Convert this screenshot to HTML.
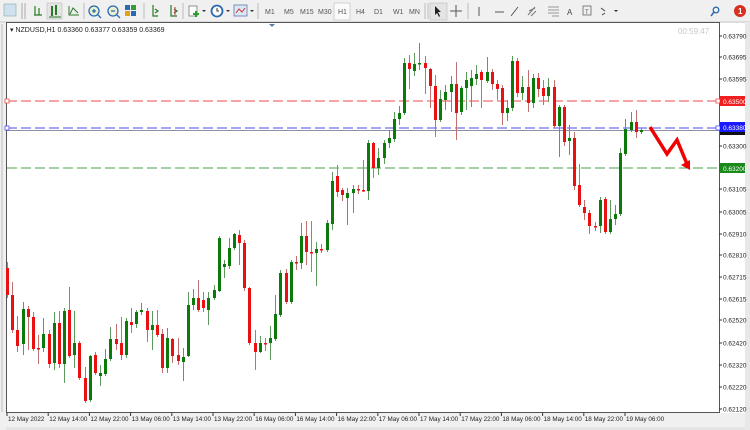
<!DOCTYPE html>
<html><head><meta charset="utf-8"><style>
html,body{margin:0;padding:0;width:750px;height:430px;overflow:hidden;background:#f0f0f0;font-family:"Liberation Sans",sans-serif}
svg{position:absolute;left:0;top:0}
text{font-family:"Liberation Sans",sans-serif}
</style></head><body>
<svg id="s" width="750" height="430" viewBox="0 0 750 430" xmlns="http://www.w3.org/2000/svg">
<rect x="0" y="0" width="750" height="22" fill="#f0f0f0"/>
<line x1="0" y1="22" x2="750" y2="22" stroke="#c8c8c8"/>
<g font-size="7" fill="#555">
<rect x="4" y="4" width="12" height="12" fill="#cfe0ee" stroke="#8aa" stroke-width="0.6"/>
<line x1="22" y1="3" x2="22" y2="19" stroke="#aaa"/><line x1="25" y1="3" x2="25" y2="19" stroke="#aaa"/>
<path d="M35 6v9M39 8v7M34 15h8" stroke="#2a7a2a" stroke-width="1.2" fill="none"/>
<rect x="47" y="3" width="15" height="16" fill="#e4e4e4" stroke="#bbb" stroke-width="0.6"/>
<path d="M52 6v10M56 5v10" stroke="#2a7a2a" stroke-width="2" fill="none"/><path d="M49 17h12" stroke="#2a7a2a"/>
<path d="M69 6v9h10M70 14l3-6 5 5" stroke="#2a7a2a" stroke-width="1" fill="none"/>
<line x1="84" y1="3" x2="84" y2="19" stroke="#bbb"/>
<circle cx="94" cy="11" r="5" fill="#e8f0d0" stroke="#2a6ab0" stroke-width="1.3"/><path d="M92 11h4M94 9v4M98 15l3 3" stroke="#2a6ab0" stroke-width="1.3"/>
<circle cx="113" cy="11" r="5" fill="#e8f0d0" stroke="#2a6ab0" stroke-width="1.3"/><path d="M111 11h4M117 15l3 3" stroke="#2a6ab0" stroke-width="1.3"/>
<rect x="125" y="5" width="5" height="5" fill="#2a6ab0"/><rect x="131" y="5" width="5" height="5" fill="#3a9a3a"/><rect x="125" y="11" width="5" height="5" fill="#e0a020"/><rect x="131" y="11" width="5" height="5" fill="#2a6ab0"/>
<line x1="144" y1="3" x2="144" y2="19" stroke="#bbb"/>
<path d="M153 5v11h5M155 9l3 2-3 2" stroke="#2a7a2a" stroke-width="1.2" fill="none"/>
<path d="M171 5v11h6M174 9l3 2-3 2" stroke="#2a7a2a" stroke-width="1.2" fill="none"/><path d="M175 7v8" stroke="#d03030"/>
<line x1="183" y1="3" x2="183" y2="19" stroke="#bbb"/>
<rect x="189" y="6" width="8" height="10" fill="#fff" stroke="#666" stroke-width="0.7"/><path d="M196 11v6M193 14h6" stroke="#2aa02a" stroke-width="2"/><path d="M202 10l2 2 2-2z" fill="#333"/>
<circle cx="217" cy="11" r="5.5" fill="#fff" stroke="#2a6ab0" stroke-width="1.8"/><path d="M217 8v3h2" stroke="#333" fill="none"/><path d="M226 10l2 2 2-2z" fill="#333"/>
<rect x="234" y="5" width="13" height="11" fill="#dce8f4" stroke="#5a7ab0" stroke-width="0.8"/><path d="M236 13l3-4 3 3 3-4" stroke="#d03030" fill="none"/><path d="M250 10l2 2 2-2z" fill="#333"/>
<line x1="258" y1="3" x2="258" y2="19" stroke="#bbb"/>
<text x="265" y="14">M1</text><text x="284" y="14">M5</text><text x="300" y="14">M15</text><text x="318" y="14">M30</text>
<rect x="334" y="3" width="16" height="17" fill="#fafafa" stroke="#bbb" stroke-width="0.6"/>
<text x="338" y="14">H1</text><text x="356" y="14">H4</text><text x="374" y="14">D1</text><text x="393" y="14">W1</text><text x="409" y="14">MN</text>
<line x1="425" y1="3" x2="425" y2="19" stroke="#bbb"/><line x1="428" y1="3" x2="428" y2="19" stroke="#bbb"/>
<rect x="430" y="3" width="17" height="17" fill="#e4e4e4" stroke="#bbb" stroke-width="0.6"/>
<path d="M435 6l0 9 2-2 2 4 1-1-2-4h3z" fill="#222"/>
<path d="M456 5v12M450 11h12" stroke="#555"/>
<line x1="468" y1="3" x2="468" y2="19" stroke="#bbb"/>
<path d="M479 7v9" stroke="#555"/><path d="M495 12h9" stroke="#555"/><path d="M511 16l7-9" stroke="#555"/>
<path d="M528 15l7-8M529 11l6-3M531 16l5-5" stroke="#777"/>
<path d="M548 7h11M548 10h11M548 13h11M552 16h7" stroke="#999"/>
<text x="567" y="15" font-size="8" fill="#444">A</text>
<rect x="583" y="6" width="8" height="9" fill="none" stroke="#666" stroke-width="0.8"/><text x="585" y="14" font-size="6">T</text>
<path d="M601 8l4 3M605 13l-3 2" stroke="#444"/><path d="M614 10l2 2 2-2z" fill="#333"/>
<circle cx="716" cy="10" r="2.8" fill="none" stroke="#2a6ab0" stroke-width="1.3"/><path d="M714 12l-3 4" stroke="#2a6ab0" stroke-width="1.5"/>
<circle cx="740" cy="11" r="6" fill="#d83020"/><text x="738" y="14" font-size="8" fill="#fff" font-weight="bold">1</text>
</g>
<rect x="6" y="23" width="739" height="390" fill="#fff"/>
<rect x="6.5" y="22.5" width="713" height="390" fill="#fff" stroke="#555" stroke-width="1"/>
<line x1="2" y1="24" x2="2" y2="412" stroke="#bbb"/>
<rect x="745" y="22" width="5" height="408" fill="#e8e8e8"/>
<text x="10" y="32" font-size="7" fill="#222">▾ NZDUSD,H1  0.63360 0.63377 0.63359 0.63369</text>
<text x="678" y="34" font-size="8" fill="#c8c8c8">00:59:47</text>
<path d="M269 24l3 3 3-3z" fill="#5a7aa0"/>
<line x1="7" y1="101" x2="719" y2="101" stroke="#e84848" stroke-dasharray="10,4"/>
<line x1="7" y1="128" x2="719" y2="128" stroke="#4a4af0" stroke-dasharray="10,4"/>
<line x1="7" y1="130.5" x2="719" y2="130.5" stroke="#9090a8"/>
<line x1="7" y1="168" x2="719" y2="168" stroke="#48a048" stroke-dasharray="10,4"/>
<rect x="5" y="99" width="4" height="4" fill="#fff" stroke="#f05050" stroke-width="0.8"/>
<rect x="5" y="126" width="4" height="4" fill="#fff" stroke="#5050ff" stroke-width="0.8"/>
<rect x="716" y="99" width="4" height="4" fill="#fff" stroke="#f05050" stroke-width="0.8"/>
<rect x="716" y="126" width="4" height="4" fill="#fff" stroke="#5050ff" stroke-width="0.8"/>
<g id="c"></g>
<path d="M650 127L667 154L677 140L687 164" stroke="#f00000" stroke-width="3.5" fill="none"/>
<path d="M681 165l9 5 0-10z" fill="#f00000"/>
<g font-size="6.5" fill="#222" id="ax"></g>
<rect x="720" y="96" width="25" height="10" fill="#f02020"/><text x="723" y="104" font-size="6.5" fill="#fff">0.63500</text>
<rect x="720" y="126" width="25" height="9" fill="#111"/>
<rect x="720" y="122" width="25" height="10" fill="#1a1aff"/><text x="723" y="130" font-size="6.5" fill="#fff">0.63380</text>
<rect x="720" y="163" width="25" height="10" fill="#1a8a1a"/><text x="723" y="171" font-size="6.5" fill="#fff">0.63200</text>
<g font-size="6.3" fill="#222" id="tx"></g>
<rect x="6" y="427" width="739" height="3" fill="#e4e4e4"/>
</svg>
<script>
var NS="http://www.w3.org/2000/svg";
function el(p,t,a,txt){var e=document.createElementNS(NS,t);for(var k in a)e.setAttribute(k,a[k]);if(txt)e.textContent=txt;p.appendChild(e);return e;}
var d=[[7,268,295,262,298],[12,295,330,282,333],[17,330,346,316,352],[23,344,309,302,355],[28,309,317,306,350],[33,317,349,312,351],[38,348,348,335,364],[43,348,334,318,352],[49,334,364,330,368],[54,363,323,312,370],[59,323,364,311,368],[64,364,311,308,383],[69,310,356,287,358],[74,355,343,311,368],[79,343,378,341,380],[85,378,401,367,403],[90,400,356,355,402],[95,355,373,352,375],[100,376,373,365,386],[105,374,359,349,376],[110,359,339,327,361],[116,339,344,324,350],[121,343,355,317,360],[126,355,321,318,358],[131,322,325,308,333],[136,324,312,310,328],[141,312,310,303,315],[147,311,330,308,342],[152,330,325,311,350],[157,325,335,310,337],[162,334,368,329,373],[167,368,338,328,373],[172,339,356,338,363],[178,355,361,338,365],[183,362,357,348,381],[188,356,305,292,357],[193,305,298,289,310],[198,298,310,280,312],[203,300,308,292,312],[208,310,298,292,325],[214,298,290,285,300],[219,291,238,236,292],[224,267,264,260,278],[229,266,248,238,269],[234,248,234,233,250],[239,235,243,230,265],[244,243,288,240,291],[249,288,343,287,345],[255,343,352,330,370],[260,352,343,336,353],[265,343,343,338,351],[270,343,338,326,360],[275,339,314,295,341],[280,315,273,270,317],[286,273,302,269,304],[291,302,262,260,304],[296,262,262,256,270],[301,263,236,223,269],[306,236,252,221,265],[311,252,252,221,272],[316,253,249,242,286],[321,249,249,244,253],[327,250,223,220,252],[332,224,181,172,230],[337,176,192,165,197],[342,190,195,188,201],[347,198,193,188,225],[353,193,189,185,213],[358,189,189,185,194],[363,190,190,160,192],[368,191,143,140,200],[373,143,168,142,178],[378,168,158,148,175],[384,158,143,140,164],[389,143,138,130,148],[394,139,119,112,142],[399,119,113,106,125],[404,113,63,58,115],[409,63,69,55,89],[414,71,64,53,76],[419,64,63,43,70],[425,63,68,56,94],[430,69,86,68,108],[435,86,120,75,137],[440,120,99,90,122],[445,100,92,85,110],[451,92,84,76,112],[456,84,113,62,140],[461,112,88,86,115],[466,88,80,72,110],[471,86,78,70,107],[476,79,74,65,85],[481,72,80,70,108],[487,81,72,57,83],[492,72,84,69,90],[497,84,89,80,100],[502,88,113,85,125],[507,113,108,100,121],[512,108,61,56,111],[517,61,93,58,97],[522,93,87,76,100],[528,87,103,70,112],[533,103,78,74,108],[538,78,89,73,97],[543,88,96,80,105],[548,96,87,78,102],[554,87,126,80,128],[559,126,107,105,157],[564,107,142,105,146],[569,141,138,125,155],[574,138,186,132,190],[579,185,205,164,207],[584,207,213,200,220],[589,213,226,210,234],[595,226,226,222,231],[600,226,200,197,233],[605,199,232,197,234],[610,232,219,200,234],[615,219,214,205,225],[620,214,153,148,216],[625,154,129,119,156],[631,130,122,112,132],[636,122,132,110,138],[641,132,130,128,134]];
var g=document.getElementById("c");
d.forEach(function(c){var x=c[0],o=c[1],cl=c[2],up=cl<o;var col=up?"#0b7a0b":"#e81010";var wc=up?"#5e9a5e":"#c07070";
el(g,"line",{x1:x+0.5,x2:x+0.5,y1:c[3],y2:c[4],stroke:wc,"stroke-width":1});
var t=Math.min(o,cl),h=Math.max(Math.abs(o-cl),1.5);el(g,"rect",{x:x-1,y:t,width:3,height:h,fill:col});});
var ax=document.getElementById("ax");
[["0.63790",36],["0.63695",57],["0.63595",79],["0.63300",146],["0.63105",189],["0.63005",212],["0.62910",234],["0.62810",255],["0.62715",277],["0.62615",299],["0.62520",320],["0.62420",343],["0.62320",365],["0.62220",387],["0.62120",409]].forEach(function(a){el(ax,"text",{x:723,y:a[1]+2.5},a[0]);el(ax,"line",{x1:719,x2:722,y1:a[1],y2:a[1],stroke:"#333"});});
var tx=document.getElementById("tx");
["12 May 2022","12 May 14:00","12 May 22:00","13 May 06:00","13 May 14:00","13 May 22:00","16 May 06:00","16 May 14:00","16 May 22:00","17 May 06:00","17 May 14:00","17 May 22:00","18 May 06:00","18 May 14:00","18 May 22:00","19 May 06:00"].forEach(function(s,i){var x=7+i*41.2;el(tx,"text",{x:x+1,y:421},s);el(tx,"line",{x1:x,x2:x,y1:413,y2:416,stroke:"#333"});});
</script>
</body></html>
